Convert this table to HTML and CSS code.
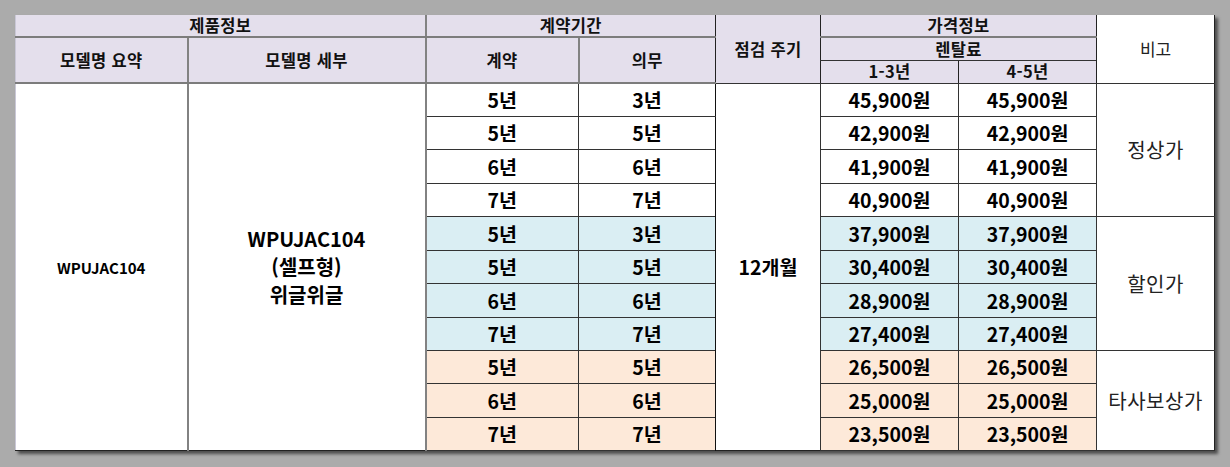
FILE: index.html
```html
<!DOCTYPE html>
<html lang="ko">
<head>
<meta charset="utf-8">
<link rel="stylesheet" href="styles.css">
</head>
<body>
<div class="sheet">
<table class="price">
  <colgroup>
    <col class="c1"><col class="c2"><col class="c3"><col class="c4"><col class="c5"><col class="c6"><col class="c7"><col class="c8">
  </colgroup>
  <thead>
    <tr class="h1">
      <th colspan="2" class="hd gb">제품정보</th>
      <th colspan="2" class="hd gb gl">계약기간</th>
      <th rowspan="3" class="hd dl gl2">점검 주기</th>
      <th colspan="2" class="hd gb dl">가격정보</th>
      <th rowspan="3" class="note dl">비고</th>
    </tr>
    <tr class="h2">
      <th rowspan="2" class="hd">모델명 요약</th>
      <th rowspan="2" class="hd gl">모델명 세부</th>
      <th rowspan="2" class="hd gl">계약</th>
      <th rowspan="2" class="hd gl">의무</th>
      <th colspan="2" class="hd db dl">렌탈료</th>
    </tr>
    <tr class="h3">
      <th class="hd dl">1-3년</th>
      <th class="hd dl">4-5년</th>
    </tr>
  </thead>
  <tbody>
    <tr>
      <td rowspan="11" class="small">WPUJAC104</td>
      <td rowspan="11" class="model gl">WPUJAC104<br>(셀프형)<br>위글위글</td>
      <td class="v gl">5년</td><td class="v">3년</td>
      <td rowspan="11" class="v cycle">12개월</td>
      <td class="v">45,900원</td><td class="v">45,900원</td>
      <td rowspan="4" class="tag">정상가</td>
    </tr>
    <tr><td class="v gl">5년</td><td class="v">5년</td><td class="v">42,900원</td><td class="v">42,900원</td></tr>
    <tr><td class="v gl">6년</td><td class="v">6년</td><td class="v">41,900원</td><td class="v">41,900원</td></tr>
    <tr><td class="v gl">7년</td><td class="v">7년</td><td class="v">40,900원</td><td class="v">40,900원</td></tr>
    <tr class="blue"><td class="v gl">5년</td><td class="v">3년</td><td class="v">37,900원</td><td class="v">37,900원</td><td rowspan="4" class="tag">할인가</td></tr>
    <tr class="blue"><td class="v gl">5년</td><td class="v">5년</td><td class="v">30,400원</td><td class="v">30,400원</td></tr>
    <tr class="blue"><td class="v gl">6년</td><td class="v">6년</td><td class="v">28,900원</td><td class="v">28,900원</td></tr>
    <tr class="blue"><td class="v gl">7년</td><td class="v">7년</td><td class="v">27,400원</td><td class="v">27,400원</td></tr>
    <tr class="peach"><td class="v gl">5년</td><td class="v">5년</td><td class="v">26,500원</td><td class="v">26,500원</td><td rowspan="3" class="tag">타사보상가</td></tr>
    <tr class="peach"><td class="v gl">6년</td><td class="v">6년</td><td class="v">25,000원</td><td class="v">25,000원</td></tr>
    <tr class="peach"><td class="v gl">7년</td><td class="v">7년</td><td class="v">23,500원</td><td class="v">23,500원</td></tr>
  </tbody>
</table>
</div>
</body>
</html>
```
FILE: styles.css
```css
html, body {
  margin: 0;
  padding: 0;
  background: #ababab;
}
body {
  width: 1230px;
  height: 467px;
  overflow: hidden;
  font-family: "Noto Sans CJK KR", "Noto Sans", sans-serif;
  color: #000;
}
.sheet {
  padding: 15px 0 0 15px;
}
.price {
  border-collapse: collapse;
  table-layout: fixed;
  width: 1199px;
  background: #fff;
  box-shadow: 3px 3px 3px rgba(0, 0, 0, 0.55);
  border-left: 1px solid #c9c7d6;
  border-bottom: 1px solid #222;
  border-right: 1px solid #222;
}
.c1 { width: 172px; }
.c2 { width: 238px; }
.c3 { width: 153px; }
.c4 { width: 137px; }
.c5 { width: 105px; }
.c6 { width: 138px; }
.c7 { width: 138px; }
.c8 { width: 118px; }

th, td {
  padding: 0;
  text-align: center;
  vertical-align: middle;
  line-height: 1;
  white-space: nowrap;
}
.h1 { height: 22px; }
.h2 { height: 23px; }
.h3 { height: 23px; }

.hd {
  background: #e4dfec;
  font-size: 16.5px;
  font-weight: 700;
  color: #111;
  letter-spacing: 0.3px;
}
.h1 .hd { border-bottom: 2px solid #7c7c7c; }
.h2 .hd { border-bottom: 2px solid #7c7c7c; }
.h3 .hd { border-bottom: 1px solid #333; }
.h2 .db { border-bottom: 1px solid #333; }
.gl { border-left: 2px solid #828282; }
.gl2 { border-left: 1px solid #444; }
.dl { border-left: 1px solid #222; }
.h1 .hd.gl2 { border-bottom: 1px solid #333; }
.note {
  background: #fff;
  font-size: 17px;
  font-weight: 400;
  color: #222;
  border-bottom: 1px solid #333;
}

tbody tr { height: 33.45px; }
tbody td {
  border-left: 1px solid #333;
  border-bottom: 1px solid #333;
}
tbody td.gl { border-left: 2px solid #828282; }
.small {
  font-size: 15px;
  font-weight: 700;
}
tbody td.small { border-left: none; border-bottom: none; }
.model {
  font-size: 20px;
  font-weight: 700;
  line-height: 28px;
}
tbody td.model { border-bottom: none; border-left: 2px solid #828282; }
.v {
  font-size: 19.5px;
  font-weight: 700;
}
.cycle { background: #fff; }
tbody td.cycle { border-left: 1px solid #111; border-bottom: none; }
.tag {
  font-size: 20px;
  font-weight: 400;
  color: #222;
  background: #fff;
  letter-spacing: 0.5px;
}
.blue td.v { background: #daeef3; }
.peach td.v { background: #fde9d9; }
```
